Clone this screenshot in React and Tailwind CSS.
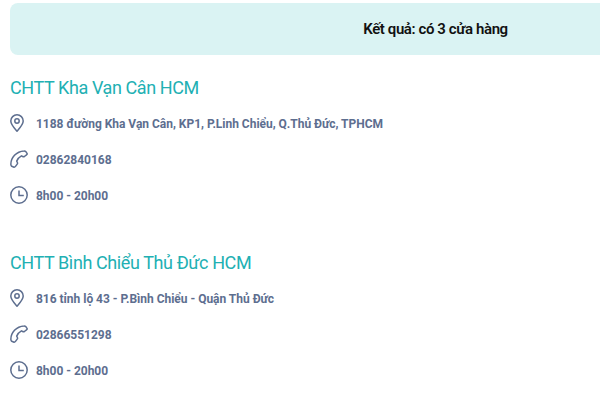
const stores = [
  { name: "CHTT Kha Vạn Cân HCM", address: "1188 đường Kha Vạn Cân, KP1, P.Linh Chiểu, Q.Thủ Đức, TPHCM", phone: "02862840168", hours: "8h00 - 20h00" },
  { name: "CHTT Bình Chiểu Thủ Đức HCM", address: "816 tỉnh lộ 43 - P.Bình Chiểu - Quận Thủ Đức", phone: "02866551298", hours: "8h00 - 20h00" },
];

function PinIcon() {
  return (
    <svg className="h-[18px] w-[18px]" viewBox="0 0 18 18" fill="none" stroke="currentColor" strokeWidth="1.500">
      <path d="M7 17.200C4.500 14.400.8 10.500.8 7a6.200 6.200 0 0 1 12.400 0C13.200 10.500 9.500 14.400 7 17.200Z" strokeLinejoin="round" />
      <circle cx="7" cy="7" r="2.200" />
    </svg>
  );
}

function PhoneIcon() {
  return (
    <svg className="h-[18px] w-[18px]" viewBox="0 0 18 18" fill="none" stroke="currentColor" strokeWidth="1.500" strokeLinejoin="round">
      <path d="M.9 14.800C.5 7.800 6.500 1.200 14 .9Q15.200.8 15.900 1.700L17 3.300Q17.500 4.300 16.500 4.900L14.400 6.500Q13.600 7 12.700 6.500L11.400 5.800C9.500 6.800 7.600 9 6.700 11.100L7.400 12.500Q7.800 13.300 7.200 14.100L5.500 16.400Q4.700 17.500 3.500 17L1.700 16.300Q1 15.900.9 14.800Z" />
    </svg>
  );
}

function ClockIcon() {
  return (
    <svg className="h-[18px] w-[18px]" viewBox="0 0 18 18" fill="none" stroke="currentColor" strokeWidth="1.500">
      <circle cx="9" cy="9" r="8.200" />
      <path d="M9 4.500v4.900h4.800" />
    </svg>
  );
}

function Row({ icon, children }) {
  return (
    <div className="flex h-9 items-center">
      <span className="w-[26px] shrink-0">{icon}</span>
      <span className="whitespace-nowrap pt-px text-[12px] font-bold tracking-[-0.02px]">{children}</span>
    </div>
  );
}

export default function App() {
  return (
    <main className="h-[410px] w-[600px] overflow-hidden bg-white pl-[10px] pt-[3px] font-['Roboto',sans-serif] text-[#5d6e8f]">
      <div className="flex h-[52px] w-[851px] items-center justify-center rounded-lg bg-[#daf3f3] text-[15px] font-semibold tracking-[-0.400px] text-[#111]">
        Kết quả: có 3 cửa hàng
      </div>
      <div className="pt-[19px]">
        {stores.map((s) => (
          <section key={s.name} className="h-[175px]">
            <h2 className="h-[31px] whitespace-nowrap text-[18px] leading-7 tracking-[-0.400px] text-[#21b0b3]">{s.name}</h2>
            <Row icon={<PinIcon />}>{s.address}</Row>
            <Row icon={<PhoneIcon />}>{s.phone}</Row>
            <Row icon={<ClockIcon />}>{s.hours}</Row>
          </section>
        ))}
      </div>
    </main>
  );
}
